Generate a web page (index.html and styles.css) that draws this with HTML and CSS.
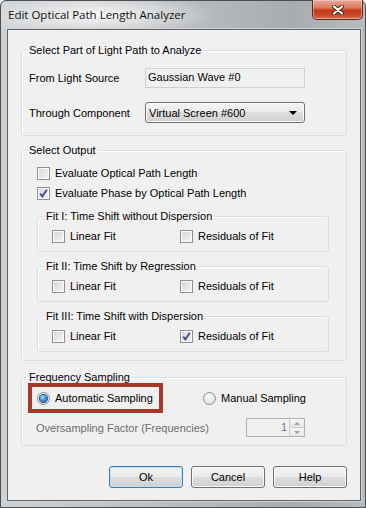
FILE: index.html
```html
<!DOCTYPE html>
<html lang="en">
<head>
  <meta charset="UTF-8" />
  <title>Edit Optical Path Length Analyzer</title>
  <link rel="stylesheet" href="styles.css">
</head>
<body>
  <div class="window">
    <div class="titlebar">
      <span class="title">Edit Optical Path Length Analyzer</span>
      <button class="close" aria-label="Close">
        <svg width="12" height="10" viewBox="0 0 12 10">
          <path d="M2 1.5 L10 8.5 M10 1.5 L2 8.5" stroke="#3a2622" stroke-width="4" stroke-linecap="round"/>
          <path d="M2 1.5 L10 8.5 M10 1.5 L2 8.5" stroke="#fff" stroke-width="2.2" stroke-linecap="round"/>
        </svg>
      </button>
    </div>

    <div class="client">
      <fieldset class="group group-path">
        <legend>Select Part of Light Path to Analyze</legend>
        <div class="form-grid">
          <span>From Light Source</span>
          <div class="textbox">Gaussian Wave #0</div>
          <span>Through Component</span>
          <div class="combo">Virtual Screen #600<span class="arrow"></span></div>
        </div>
      </fieldset>

      <fieldset class="group group-output">
        <legend>Select Output</legend>
        <label class="check"><span class="box"></span>Evaluate Optical Path Length</label>
        <label class="check second"><span class="box checked"><svg width="11" height="11" viewBox="0 0 11 11"><path d="M2.2 5.6 L4.4 8.4 L8.8 1.8" fill="none" stroke="#44508a" stroke-width="1.9"/></svg></span>Evaluate Phase by Optical Path Length</label>

        <fieldset class="fit">
          <legend>Fit I: Time Shift without Dispersion</legend>
          <div class="fit-row">
            <label class="check"><span class="box"></span>Linear Fit</label>
            <label class="check"><span class="box"></span>Residuals of Fit</label>
          </div>
        </fieldset>

        <fieldset class="fit">
          <legend>Fit II: Time Shift by Regression</legend>
          <div class="fit-row">
            <label class="check"><span class="box"></span>Linear Fit</label>
            <label class="check"><span class="box"></span>Residuals of Fit</label>
          </div>
        </fieldset>

        <fieldset class="fit">
          <legend>Fit III: Time Shift with Dispersion</legend>
          <div class="fit-row">
            <label class="check"><span class="box"></span>Linear Fit</label>
            <label class="check"><span class="box checked"><svg width="11" height="11" viewBox="0 0 11 11"><path d="M2.2 5.6 L4.4 8.4 L8.8 1.8" fill="none" stroke="#44508a" stroke-width="1.9"/></svg></span>Residuals of Fit</label>
          </div>
        </fieldset>
      </fieldset>

      <fieldset class="group group-sampling">
        <legend>Frequency Sampling</legend>
        <div class="radio-row">
          <div class="mark">
            <label class="radio"><span class="dot selected"></span>Automatic Sampling</label>
          </div>
          <label class="radio"><span class="dot"></span>Manual Sampling</label>
        </div>
        <div class="factor-row">
          <span class="disabled">Oversampling Factor (Frequencies)</span>
          <div class="spin">
            <span class="spin-value">1</span>
            <span class="spin-buttons">
              <span class="spin-up"></span>
              <span class="spin-down"></span>
            </span>
          </div>
        </div>
      </fieldset>

      <div class="buttons">
        <button class="btn default">Ok</button>
        <button class="btn">Cancel</button>
        <button class="btn">Help</button>
      </div>
    </div>
  </div>
</body>
</html>
```

FILE: styles.css
```css
* {
  box-sizing: border-box;
}

body {
  margin: 0;
  width: 366px;
  height: 508px;
  overflow: hidden;
  background: #fff;
  font-family: "Liberation Sans", Arial, sans-serif;
  font-size: 11px;
  color: #000;
}

.window {
  width: 366px;
  height: 508px;
  border: 1px solid #4b4e52;
  border-radius: 6px 6px 0 0;
  background:
    radial-gradient(ellipse 120px 22px at 95px 14px, rgba(255,255,255,0.85), rgba(255,255,255,0)),
    linear-gradient(to right, #cfd2d5, #b7babd 55%, #a9acaf 80%, #b8bbbe);
  display: flex;
  flex-direction: column;
}

.titlebar {
  height: 28px;
  display: flex;
  justify-content: space-between;
  align-items: flex-start;
}

.title {
  font-family: "Open Sans", "Liberation Sans", sans-serif;
  font-size: 11.5px;
  line-height: 16px;
  margin: 6px 0 0 7px;
  color: #111;
}

.close {
  width: 51px;
  height: 20px;
  margin: -1px 2px 0 0;
  padding: 0;
  border: 1px solid #5a2a22;
  border-top: none;
  border-radius: 0 0 5px 5px;
  background: linear-gradient(#eba896, #dc7a60 40%, #c43a18 55%, #cc4f2e 85%, #dc7c5c);
  box-shadow: inset 0 0 0 1px rgba(255,255,255,0.35);
  display: flex;
  align-items: center;
  justify-content: center;
}

.client {
  height: 472px;
  margin: 0 4px 0 6px;
  border: 1px solid #5e6266;
  background: #f0f0f0;
  box-shadow: 0 0 0 1px #d2d4d6;
  display: flex;
  flex-direction: column;
}

fieldset {
  min-width: 0;
  border: 1px solid #d5dfe5;
  border-radius: 3px;
  box-shadow: inset 1px 1px 0 #fff;
}

legend {
  padding: 0 2px;
  line-height: 13px;
}

.group {
  margin: 0 13px;
}

.group-path {
  margin-top: 14px;
  padding: 11px 0 12px 7px;
}

.group-path > legend {
  margin-left: -2px;
}

.form-grid {
  display: grid;
  grid-template-columns: 116px 160px;
  row-gap: 14px;
  align-items: center;
}

.textbox {
  height: 20px;
  border: 1px solid #cdd1d5;
  background: #f0f0f0;
  padding: 2px 0 0 2px;
}

.combo {
  height: 21px;
  border: 1px solid #707070;
  border-radius: 3px;
  background: linear-gradient(#f3f3f3, #ebebeb 50%, #dedede 50%, #d0d0d0);
  box-shadow: inset 0 0 0 1px #fbfbfb;
  display: flex;
  align-items: center;
  justify-content: space-between;
  padding: 0 7px 0 3px;
}

.arrow {
  border-top: 4px solid #000;
  border-left: 4px solid transparent;
  border-right: 4px solid transparent;
}

.group-output {
  margin-top: 8px;
  padding: 8px 17px 8px 15px;
}

.group-output > legend,
.group-sampling > legend {
  margin-left: -10px;
}

.check,
.radio {
  display: flex;
  align-items: center;
  gap: 5px;
  height: 16px;
  white-space: nowrap;
}

.check.second {
  margin-top: 4px;
}

.box {
  width: 13px;
  height: 13px;
  border: 1px solid #8e8f8f;
  background: linear-gradient(135deg, #d3d6da, #f6f6f6);
  box-shadow: inset 0 0 0 1px #fbfbfb;
  display: flex;
  align-items: center;
  justify-content: center;
}

.fit {
  margin: 8px 0 0;
  padding: 5px 0 7px 14px;
}

.fit > legend {
  margin-left: -8px;
}

.group-output > .fit:first-of-type {
  margin-top: 9px;
}

.fit-row {
  display: grid;
  grid-template-columns: 128px auto;
}

.group-sampling {
  margin-top: 10px;
  padding: 6px 0 8px 15px;
}

.radio-row {
  display: grid;
  grid-template-columns: 166px auto;
}

.mark {
  width: 135px;
  margin: -7px 0 -7px -9px;
  padding: 3px 0 3px 5px;
  border: 4px solid #a63a29;
}

.dot {
  width: 13px;
  height: 13px;
  border-radius: 50%;
  border: 1px solid #8c8f93;
  background: radial-gradient(circle at 40% 35%, #fdfdfd, #d4d6d9);
  display: flex;
  align-items: center;
  justify-content: center;
}

.dot.selected::after {
  content: "";
  width: 7px;
  height: 7px;
  border-radius: 50%;
  background: radial-gradient(circle at 40% 35%, #a8dcfa, #2f86d0 55%, #0e3f7a);
  box-shadow: 0 0 0 1px #1d4f86;
}

.factor-row {
  display: grid;
  grid-template-columns: 209px 59px;
  align-items: center;
  margin-top: 12px;
}

.disabled {
  color: #6d6d6d;
  margin-left: -1px;
}

.spin {
  height: 19px;
  border: 1px solid #adb2b5;
  background: #f0f0f0;
  display: flex;
}

.spin-value {
  flex: 1;
  text-align: right;
  padding: 2px 2px 0 0;
  color: #7c6f86;
}

.spin-buttons {
  width: 15px;
  border-left: 1px solid #c9ccd0;
  display: flex;
  flex-direction: column;
}

.spin-up,
.spin-down {
  flex: 1;
  display: flex;
  align-items: center;
  justify-content: center;
  background: linear-gradient(#f6f6f6, #e6e6e6);
}

.spin-up {
  border-bottom: 1px solid #c9ccd0;
}

.spin-up::after,
.spin-down::after {
  content: "";
  border-left: 3px solid transparent;
  border-right: 3px solid transparent;
}

.spin-up::after {
  border-bottom: 3px solid #a0a0a0;
}

.spin-down::after {
  border-top: 3px solid #a0a0a0;
}

.buttons {
  display: flex;
  justify-content: flex-end;
  gap: 8px;
  margin: 20px 13px 0 0;
}

.btn {
  width: 74px;
  height: 22px;
  padding: 0;
  border: 1px solid #707070;
  border-radius: 3px;
  background: linear-gradient(#f3f3f3, #ebebeb 50%, #dedede 50%, #d0d0d0);
  box-shadow: inset 0 0 0 1px #fbfbfb;
  font-family: "Liberation Sans", Arial, sans-serif;
  font-size: 11px;
  color: #000;
}

.btn.default {
  border-color: #3c7fb1;
  box-shadow: inset 0 0 0 1px #b8e2f7;
}
```
